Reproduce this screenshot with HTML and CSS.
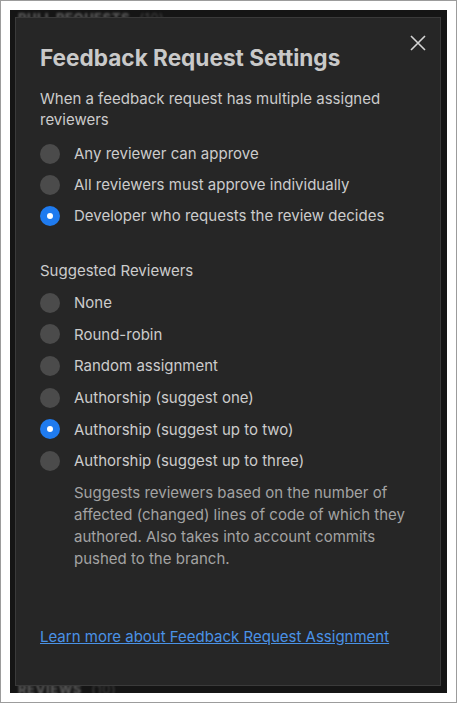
FILE: index.html
```html
<!DOCTYPE html>
<html>
<head>
<meta charset="utf-8">
<link rel="stylesheet" href="styles.css">
</head>
<body>
<div class="page">
  <div class="frame">
    <div class="bg-header">PULL REQUESTS <span class="count">(10)</span></div>
    <div class="bg-footer">REVIEWS <span class="count">(10)</span></div>
    <div class="dialog">
      <button class="close" aria-label="Close">
        <svg width="16" height="16" viewBox="0 0 16 16"><path d="M1 1 L15 15 M15 1 L1 15" stroke="#d4d4d4" stroke-width="1.6" fill="none"/></svg>
      </button>
      <h1 class="title">Feedback Request Settings</h1>
      <p class="question">When a feedback request has multiple assigned reviewers</p>
      <ul class="options options-first">
        <li class="option"><span class="radio"></span>Any reviewer can approve</li>
        <li class="option"><span class="radio"></span>All reviewers must approve individually</li>
        <li class="option"><span class="radio checked"></span>Developer who requests the review decides</li>
      </ul>
      <p class="section">Suggested Reviewers</p>
      <ul class="options options-second">
        <li class="option"><span class="radio"></span>None</li>
        <li class="option"><span class="radio"></span>Round-robin</li>
        <li class="option"><span class="radio"></span>Random assignment</li>
        <li class="option"><span class="radio"></span>Authorship (suggest one)</li>
        <li class="option"><span class="radio checked"></span>Authorship (suggest up to two)</li>
        <li class="option"><span class="radio"></span>Authorship (suggest up to three)</li>
      </ul>
      <p class="desc">Suggests reviewers based on the number of affected (changed) lines of code of which they authored. Also takes into account commits pushed to the branch.</p>
      <a class="link" href="#">Learn more about Feedback Request Assignment</a>
    </div>
  </div>
</div>
</body>
</html>
```
FILE: styles.css
```css
* { box-sizing: border-box; }
html, body { margin: 0; padding: 0; }
body {
  background: #ffffff;
  font-family: Inter, "Liberation Sans", sans-serif;
}
.page {
  width: 457px;
  height: 703px;
  border: 1px solid #9c9c9c;
  padding: 9px;
}
.frame {
  position: relative;
  width: 437px;
  height: 683px;
  background: #151515;
  overflow: hidden;
}
.bg-header, .bg-footer {
  position: absolute;
  left: 8px;
  font-size: 13px;
  line-height: 16px;
  font-weight: 800;
  color: #5a5a5a;
  filter: blur(1px);
  letter-spacing: 0.5px;
}
.bg-header { top: 0; }
.bg-footer { bottom: -4px; }
.count { font-weight: 400; color: #444; margin-left: 6px; }
.dialog {
  position: absolute;
  left: 5px;
  top: 7px;
  width: 426px;
  height: 669px;
  background: #262626;
  border: 1px solid #3a3a3a;
  padding: 25px 24px 0 24px;
  color: #cfcfcf;
}
.close {
  position: absolute;
  top: 16px;
  right: 13px;
  width: 18px;
  height: 18px;
  padding: 1px;
  border: 0;
  background: none;
  display: flex;
  align-items: center;
  justify-content: center;
}
.title {
  margin: 0;
  font-size: 22.6px;
  line-height: 30px;
  font-weight: 700;
  color: #c9c9c9;
}
.question {
  margin: 15px 0 0 0;
  font-size: 15px;
  line-height: 21px;
  color: #cccccc;
}
.options {
  list-style: none;
  margin: 0;
  padding: 0;
}
.options-first { margin-top: 8px; }
.options-second { margin-top: 6px; }
.option {
  display: flex;
  align-items: center;
  gap: 14px;
  height: 31.6px;
  font-size: 15px;
  color: #cccccc;
}
.options-first .option { height: 31px; }
.radio {
  width: 20px;
  height: 20px;
  border-radius: 50%;
  background: #4b4b4b;
  flex: none;
}
.radio.checked {
  background: #1f7bef;
  position: relative;
}
.radio.checked::after {
  content: "";
  position: absolute;
  left: 7px;
  top: 7px;
  width: 6px;
  height: 6px;
  border-radius: 50%;
  background: #ffffff;
}
.section {
  margin: 29px 0 0 0;
  font-size: 15px;
  line-height: 21px;
  color: #cccccc;
}
.desc {
  margin: 5px 0 0 34px;
  font-size: 15px;
  line-height: 22px;
  color: #a3a3a3;
}
.link {
  display: inline-block;
  margin-top: 56px;
  font-size: 15px;
  line-height: 21px;
  color: #4a92e6;
  text-decoration: underline;
}
```
